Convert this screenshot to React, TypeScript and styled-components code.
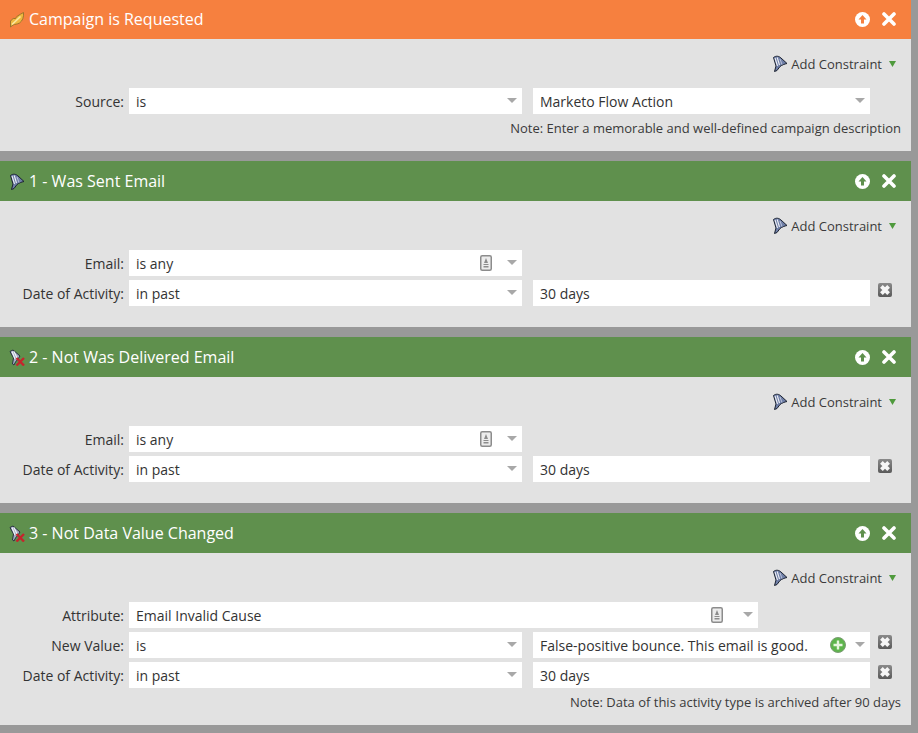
import * as React from "react";
import styled, { createGlobalStyle } from "styled-components";

const GlobalStyle = createGlobalStyle`
  html, body {
    margin: 0;
    padding: 0;
    background: #999999;
  }
  body {
    font-family: "Open Sans", "Liberation Sans", sans-serif;
  }
`;

const Page = styled.div`
  width: 911px;
  height: 733px;
  overflow: hidden;
  display: flex;
  flex-direction: column;
  gap: 10px;
`;

const Block = styled.section`
  display: flex;
  flex-direction: column;
  flex-shrink: 0;
`;

const Header = styled.header<{ $tone: "orange" | "green" }>`
  height: ${(p) => (p.$tone === "orange" ? 39 : 40)}px;
  background: ${(p) => (p.$tone === "orange" ? "#f6803f" : "#5f904d")};
  display: flex;
  align-items: center;
  padding: ${(p) => (p.$tone === "orange" ? "0 15px 1px 9px" : "0 15px 0 9px")};
  box-sizing: border-box;
  color: #ffffff;
  flex-shrink: 0;
`;

const HeaderIcon = styled.span`
  width: 16px;
  height: 17px;
  margin-right: 4px;
  display: flex;
`;

const Title = styled.h2`
  flex: 1;
  margin: 0;
  font-size: 16px;
  font-weight: 400;
  line-height: 20px;
  color: #ffffff;
`;

const HeaderActions = styled.div`
  display: flex;
  align-items: center;
  gap: 12px;
`;

const Body = styled.div<{ $bottom: number }>`
  background: #e2e2e2;
  padding-bottom: ${(p) => p.$bottom}px;
  color: #333333;
  font-size: 13px;
`;

const Toolbar = styled.div`
  height: 49px;
  display: flex;
  justify-content: flex-end;
  align-items: center;
  padding: 0 15px 0 0;
  box-sizing: border-box;
  color: #3a3a3a;
`;

const ToolText = styled.span`
  margin: 0 7px 0 3px;
  font-size: 13px;
`;

const Rows = styled.div`
  display: flex;
  flex-direction: column;
  gap: 4px;
`;

const Row = styled.div`
  display: flex;
  align-items: center;
  height: 26px;
`;

const Label = styled.label`
  width: 124px;
  margin-right: 5px;
  text-align: right;
  font-size: 14px;
  color: #333333;
  flex-shrink: 0;
`;

const Field = styled.div<{ $width: number; $gap?: number }>`
  position: relative;
  width: ${(p) => p.$width}px;
  height: 26px;
  margin-left: ${(p) => p.$gap ?? 0}px;
  background: #ffffff;
  box-sizing: border-box;
  padding: 0 7px;
  display: flex;
  align-items: center;
  font-size: 14px;
  color: #333333;
  flex-shrink: 0;
`;

const Caret = styled.span`
  position: absolute;
  right: 5px;
  top: 10px;
  width: 0;
  height: 0;
  border-left: 5px solid transparent;
  border-right: 5px solid transparent;
  border-top: 5px solid #a8a8a8;
`;

const FieldIcon = styled.span<{ $right: number }>`
  position: absolute;
  right: ${(p) => p.$right}px;
  top: 5px;
  display: flex;
`;

const RemoveButton = styled.span`
  margin-left: 8px;
  margin-top: -6px;
  display: flex;
`;

const Note = styled.div`
  height: 23px;
  display: flex;
  align-items: center;
  justify-content: flex-end;
  padding: 5px 10px 0 0;
  box-sizing: border-box;
  font-size: 13px;
  color: #3a3a3a;
`;

const ArrowUpIcon = ({ fill }: { fill: string }) => (
  <svg width="15" height="15" viewBox="0 0 15 15">
    <circle cx="7.5" cy="7.5" r="7.5" fill="#fff" />
    <path d="M7.5 3 L11.5 7.5 H9 V11.5 H6 V7.5 H3.5 Z" fill={fill} />
  </svg>
);

const CloseIcon = () => (
  <svg width="14" height="14" viewBox="0 0 14 14">
    <path d="M2 2 L12 12 M12 2 L2 12" stroke="#fff" strokeWidth="3.6" strokeLinecap="round" />
  </svg>
);

const Feather = () => (
  <svg width="16" height="17" viewBox="0 0 16 17">
    <path d="M1.5 16 L1.5 10 C2.5 8.5 4 8 5 7 L6 8 C7 5.5 10 4 14.5 1.5 C15 6 13.5 10 10.5 12 C8 13.5 6 13 4 14 Z" fill="#efb940" stroke="#94702a" strokeWidth="0.9" strokeLinejoin="round" />
    <path d="M3 13.5 L11.5 5.5" stroke="#fbe9a0" strokeWidth="1.6" />
  </svg>
);

const Funnel = () => (
  <svg width="16" height="17" viewBox="0 0 16 17">
    <path d="M1.5 2.5 C4 0.5 7 1 9 3 L15 8.5 C12.5 9 10 10 8 11.5 L5 15.5 L2.5 16.5 L4 11 Z" fill="#6f7fa8" stroke="#1b2230" strokeWidth="1" strokeLinejoin="round" />
    <path d="M3 3 L5.5 11 M5.2 2.5 L7.5 10" stroke="#eef0f5" strokeWidth="1.1" />
    <path d="M8 4 L10 9.5" stroke="#bcc4da" strokeWidth="1" />
  </svg>
);

const NotFunnel = () => (
  <svg width="16" height="17" viewBox="0 0 16 17">
    <path d="M1 2.5 L4 1 L11 7 L9 10 L6.5 13 L5 16 L3.5 15 L4.5 9 Z" fill="#a3adc3" stroke="#27303f" strokeWidth="1" strokeLinejoin="round" />
    <path d="M3 2.5 L6 10 M5 2.5 L8 9" stroke="#f0f2f7" strokeWidth="1.2" />
    <path d="M7.5 9 L15 16.5 M15 9 L7.5 16.5" stroke="#c6242c" strokeWidth="2.4" />
  </svg>
);

const TinyDown = () => (
  <svg width="7" height="6" viewBox="0 0 7 6">
    <path d="M0 0 H7 L3.5 6 Z" fill="#4f9a3c" />
  </svg>
);

const ListIcon = () => (
  <svg width="12" height="16" viewBox="0 0 12 16">
    <rect x="0.75" y="0.75" width="10.5" height="14.5" rx="1.5" fill="#ececec" stroke="#8c8c8c" strokeWidth="1.5" />
    <path d="M6 3 L8 8 H4 Z M3.5 9 H8.5 V10 H3.5 Z M3.5 11 H8.5 V12.5 H3.5 Z" fill="#8c8c8c" />
  </svg>
);

const PlusIcon = () => (
  <svg width="16" height="16" viewBox="0 0 16 16">
    <circle cx="8" cy="8" r="7.5" fill="#5eb44c" stroke="#7d9c76" strokeWidth="1" />
    <path d="M8 3.5 V12.5 M3.5 8 H12.5" stroke="#e8f6e0" strokeWidth="2.4" />
  </svg>
);

const RemoveIcon = () => (
  <svg width="14" height="14" viewBox="0 0 14 14">
    <defs>
      <linearGradient id="removeFill" x1="0" y1="0" x2="0" y2="1">
        <stop offset="0" stopColor="#8a8a8a" />
        <stop offset="1" stopColor="#5a5a5a" />
      </linearGradient>
    </defs>
    <rect width="14" height="14" rx="2" fill="url(#removeFill)" />
    <path d="M3.4 3.4 L10.6 10.6 M10.6 3.4 L3.4 10.6" stroke="#f6f6f6" strokeWidth="3.8" />
  </svg>
);

type FieldData = {
  text: string;
  width: number;
  gap?: number;
  caret?: boolean;
  listAt?: number;
  plusAt?: number;
};

type RowData = { label: string; fields: FieldData[]; removable?: boolean };

type BlockData = {
  title: string;
  tone: "orange" | "green";
  icon: React.ReactNode;
  rows: RowData[];
  note?: string;
  bottom: number;
};

const dateRow: RowData = {
  label: "Date of Activity:",
  removable: true,
  fields: [
    { text: "in past", width: 393, caret: true },
    { text: "30 days", width: 337, gap: 11 },
  ],
};

const emailRows: RowData[] = [
  { label: "Email:", fields: [{ text: "is any", width: 393, caret: true, listAt: 30 }] },
  dateRow,
];

const blocks: BlockData[] = [
  {
    title: "Campaign is Requested",
    tone: "orange",
    icon: <Feather />,
    rows: [
      {
        label: "Source:",
        fields: [
          { text: "is", width: 393, caret: true },
          { text: "Marketo Flow Action", width: 337, gap: 11, caret: true },
        ],
      },
    ],
    note: "Note: Enter a memorable and well-defined campaign description",
    bottom: 14,
  },
  { title: "1 - Was Sent Email", tone: "green", icon: <Funnel />, rows: emailRows, bottom: 21 },
  { title: "2 - Not Was Delivered Email", tone: "green", icon: <NotFunnel />, rows: emailRows, bottom: 21 },
  {
    title: "3 - Not Data Value Changed",
    tone: "green",
    icon: <NotFunnel />,
    rows: [
      { label: "Attribute:", fields: [{ text: "Email Invalid Cause", width: 629, caret: true, listAt: 35 }] },
      {
        label: "New Value:",
        removable: true,
        fields: [
          { text: "is", width: 393, caret: true },
          { text: "False-positive bounce. This email is good.", width: 337, gap: 11, caret: true, plusAt: 24 },
        ],
      },
      dateRow,
    ],
    note: "Note: Data of this activity type is archived after 90 days",
    bottom: 14,
  },
];

export default function App() {
  return (
    <>
      <GlobalStyle />
      <Page>
        {blocks.map((block) => (
          <Block key={block.title}>
            <Header $tone={block.tone}>
              <HeaderIcon>{block.icon}</HeaderIcon>
              <Title>{block.title}</Title>
              <HeaderActions>
                <ArrowUpIcon fill={block.tone === "orange" ? "#f6803f" : "#5f904d"} />
                <CloseIcon />
              </HeaderActions>
            </Header>
            <Body $bottom={block.bottom}>
              <Toolbar>
                <Funnel />
                <ToolText>Add Constraint</ToolText>
                <TinyDown />
              </Toolbar>
              <Rows>
                {block.rows.map((row) => (
                  <Row key={row.label}>
                    <Label>{row.label}</Label>
                    {row.fields.map((field) => (
                      <Field key={field.text} $width={field.width} $gap={field.gap}>
                        {field.text}
                        {field.listAt !== undefined && (
                          <FieldIcon $right={field.listAt}>
                            <ListIcon />
                          </FieldIcon>
                        )}
                        {field.plusAt !== undefined && (
                          <FieldIcon $right={field.plusAt}>
                            <PlusIcon />
                          </FieldIcon>
                        )}
                        {field.caret && <Caret />}
                      </Field>
                    ))}
                    {row.removable && (
                      <RemoveButton>
                        <RemoveIcon />
                      </RemoveButton>
                    )}
                  </Row>
                ))}
              </Rows>
              {block.note && <Note>{block.note}</Note>}
            </Body>
          </Block>
        ))}
      </Page>
    </>
  );
}
